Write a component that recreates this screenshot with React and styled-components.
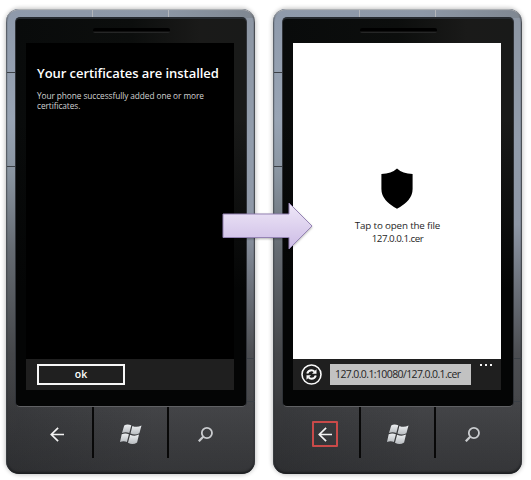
import React from "react";
import styled, { createGlobalStyle } from "styled-components";

const GlobalStyle = createGlobalStyle`
  html, body { margin: 0; background: #fff; overflow: hidden; }
  *, *::before, *::after { box-sizing: border-box; }
  body { font-family: "Open Sans", "Noto Sans", sans-serif; }
`;

const Stage = styled.main`
  position: relative;
  display: flex;
  gap: 18px;
  width: 531px;
  height: 480px;
  padding: 9px 0 0 6px;
  background: #fff;
`;

const Body = styled.section`
  position: relative;
  display: flex;
  flex-direction: column;
  flex: none;
  width: 249px;
  height: 465px;
  padding: 8px 8px 0 9px;
  overflow: hidden;
  border-radius: 13px;
  background:
    linear-gradient(180deg, transparent 385px, rgba(30, 31, 33, 0.3) 465px),
    linear-gradient(90deg, rgba(20, 22, 24, 0.25), transparent 60%),
    linear-gradient(180deg, #8d96a3 0, #929dac 130px, #8e97a6 215px, #707680 270px, #4c4e52 345px, #454649 400px, #3e3f42 465px);
`;

const LeftRail = styled.span`
  position: absolute;
  left: 0;
  top: 0;
  width: 10px;
  height: 465px;
  background: linear-gradient(180deg, #8f9aab 0, #98a4b4 110px, #8994a0 165px, #656b72 240px, #45474a 345px, rgba(56, 57, 59, 0.4) 400px, transparent 430px);
`;

const TopRail = styled.span`
  position: absolute;
  left: 0;
  top: 0;
  width: 249px;
  height: 9px;
  background: linear-gradient(90deg, #8f9aab, #8d98a7 60%, #7f8791);
`;

const Rim = styled.span`
  position: absolute;
  inset: 0;
  border-radius: 13px;
  box-shadow: inset 0 1px 1px #b4b6b9, inset 1px 0 1px rgba(50, 55, 62, 0.55),
    inset -1px 0 1px rgba(35, 38, 44, 0.7), inset 0 -2px 2px #1d1e20;
`;

const Halo = styled.div`
  flex: none;
  width: 249px;
  height: 465px;
  border-radius: 14px;
  box-shadow: 0 0 4px 1px rgba(0, 0, 0, 0.23);
`;

const Seam = styled.span`
  position: absolute;
  left: ${(p) => p.$x}px;
  top: ${(p) => p.$y}px;
  width: ${(p) => (p.$vertical ? 1 : 8)}px;
  height: ${(p) => (p.$vertical ? 7 : 1)}px;
  background: ${(p) => (p.$vertical ? "#b3b6bb" : "#3c4147")};
`;

const Glass = styled.div`
  position: relative;
  display: flex;
  flex-direction: column;
  align-items: flex-start;
  height: 390px;
  flex: none;
  padding: 9px 0 0 10px;
  border: 1px solid #303338;
  border-top: 2px solid #262a2f;
  border-bottom-color: #606164;
  border-radius: 5px;
  background:
    linear-gradient(180deg, transparent 100px, #040505 270px),
    linear-gradient(90deg, #090b0b 0, #0c0e0d 50%, #1a1a19 80%, #191a19 100%);
`;

const Speaker = styled.span`
  width: 77px;
  height: 5px;
  flex: none;
  margin: 0 0 10px 67px;
  border-radius: 2px;
  background: linear-gradient(180deg, #000 55%, #303131);
`;

const Screen = styled.div`
  display: flex;
  flex-direction: column;
  width: 208px;
  height: 347px;
  flex: none;
  background: ${(p) => (p.$light ? "#fff" : "#000")};
`;

const Message = styled.div`
  flex: 1;
  padding: 21px 0 0 11px;
  color: #fff;
`;

const Title = styled.h1`
  margin: 0;
  font: 600 13px/18px "Open Sans", sans-serif;
  letter-spacing: -0.06px;
  white-space: nowrap;
`;

const Description = styled.p`
  margin: 9px 0 0;
  color: #d2d2d2;
  font: 400 8.3px/10px "Open Sans", sans-serif;
  letter-spacing: -0.08px;
  white-space: nowrap;
`;

const AppBar = styled.div`
  display: flex;
  align-items: flex-start;
  height: 31px;
  flex: none;
  padding: ${(p) => (p.$browser ? "5px 5px 0 8px" : "5px 0 0 11px")};
  background: #1f1f1f;
`;

const OkButton = styled.button`
  width: 88px;
  height: 21px;
  padding: 0;
  border: 2px solid #f7f7f7;
  background: #202020;
  color: #fff;
  font: 600 10.5px/15px "Open Sans", sans-serif;
`;

const FilePrompt = styled.div`
  flex: 1;
  display: flex;
  flex-direction: column;
  align-items: center;
  padding-top: 125px;
`;

const Shield = styled.svg`
  width: 32px;
  height: 41px;
`;

const PromptText = styled.p`
  margin: 10px 0 0 1px;
  color: #262626;
  font: 400 9.8px/13px "Open Sans", sans-serif;
  letter-spacing: -0.16px;
  text-align: center;
`;

const FileName = styled.span`
  display: block;
  letter-spacing: -0.5px;
`;

const Address = styled.div`
  width: 141px;
  height: 21px;
  margin-left: 8px;
  padding-left: 5px;
  background: #c2c2c2;
  color: #252525;
  font: 400 10.5px/21px "Open Sans", sans-serif;
  letter-spacing: -0.61px;
  white-space: nowrap;
`;

const Dots = styled.div`
  display: flex;
  gap: 3px;
  margin: 0 0 0 9px;
`;

const Dot = styled.span`
  width: 2px;
  height: 2px;
  background: #f4f4f4;
`;

const Keys = styled.nav`
  display: grid;
  grid-template-columns: 79px 75px 1fr;
  height: 51px;
`;

const Key = styled.div`
  display: flex;
  align-items: center;
  justify-content: ${(p) => (p.$offset ? "flex-start" : "center")};
  padding: 3px 0 0 ${(p) => p.$offset || 0}px;
  border-right: ${(p) => (p.$divider ? "2px solid #080808" : "none")};
`;

const Focus = styled.span`
  display: grid;
  place-items: center;
  width: 26px;
  height: 26px;
  border: 2px solid ${(p) => (p.$active ? "#c94a49" : "transparent")};
  border-radius: 1px;
`;

const Arrow = styled.svg`
  position: absolute;
  left: 220px;
  top: 198.5px;
  width: 96px;
  height: 54px;
  filter: drop-shadow(0 1px 1px rgba(0, 0, 0, 0.3));
`;

const BackIcon = () => (
  <svg width="14" height="15" viewBox="0 0 14 15" fill="none" stroke="#f3f3f3" strokeWidth="1.7">
    <path d="M14 7.5H1.5M8.1 .8L1.3 7.5l6.8 6.7" />
  </svg>
);

const WindowsIcon = () => (
  <svg width="22" height="21" viewBox="0 0 22 21">
    <defs>
      <linearGradient id="flag" x1="0" y1="0" x2="0" y2="1">
        <stop offset="0" stopColor="#eceef0" />
        <stop offset="1" stopColor="#b9bdc1" />
      </linearGradient>
    </defs>
    <g fill="url(#flag)">
      <path d="M4.2 1.4Q7.2-.2 11.3 1.3L9.3 9.1Q5.7 7.4 2 9.1Z" />
      <path d="M12.4 1.9Q16.8 3.8 21.5 1.6L19.4 9.3Q15.2 11.5 10.5 9.6Z" />
      <path d="M1.7 10.3Q5.2 8.6 8.9 10.2L6.9 18Q3.5 16.6 0 18.1Z" />
      <path d="M10.1 10.7Q14.6 12.7 19 10.6L17.1 18.4Q12.8 21.3 8 18.7Z" />
    </g>
  </svg>
);

const SearchIcon = () => (
  <svg width="15" height="15" viewBox="0 0 15 15" fill="none" stroke="#c9cbce" strokeWidth="1.8">
    <circle cx="8.9" cy="6" r="5.1" />
    <path d="M5.2 9.7L.8 14.3" strokeWidth="2.2" />
  </svg>
);

const RefreshIcon = () => (
  <svg width="21" height="21" viewBox="0 0 21 21" fill="none" stroke="#fafafa">
    <circle cx="10.5" cy="10.5" r="9.5" strokeWidth="1.6" />
    <path d="M6.2 9.5Q7.2 6.3 10.6 6.3Q12.3 6.3 13.5 7.6M14.8 11.5Q13.8 14.7 10.4 14.7Q8.7 14.7 7.5 13.4" strokeWidth="2" />
    <path d="M15.5 5.3V9.8H11ZM5.5 15.7V11.2H10Z" fill="#fafafa" stroke="none" />
  </svg>
);

function Phone({ light, backActive, children }) {
  return (
    <Halo>
      <Body>
        <LeftRail />
        <TopRail />
        <Rim />
        <Seam $x={86} $y={1} $vertical />
        <Seam $x={162} $y={1} $vertical />
        <Seam $x={1} $y={63} />
        <Seam $x={1} $y={157} />
        <Seam $x={241} $y={349} />
        <Seam $x={241} $y={392} />
        <Glass>
          <Speaker />
          <Screen $light={light}>{children}</Screen>
        </Glass>
        <Keys>
          <Key $divider $offset={backActive ? 30 : 29}>
            <Focus $active={backActive}><BackIcon /></Focus>
          </Key>
          <Key $divider><WindowsIcon /></Key>
          <Key $offset={29}><SearchIcon /></Key>
        </Keys>
      </Body>
    </Halo>
  );
}

export default function App() {
  return (
    <>
      <GlobalStyle />
      <Stage>
        <Phone>
          <Message>
            <Title>Your certificates are installed</Title>
            <Description>
              Your phone successfully added one or more
              <br />
              certificates.
            </Description>
          </Message>
          <AppBar>
            <OkButton>ok</OkButton>
          </AppBar>
        </Phone>
        <Phone light backActive>
          <FilePrompt>
            <Shield viewBox="0 0 32 41">
              <path d="M16 .5Q21.5 5.8 31.6 6V21Q31.6 32.5 16 40.7Q.4 32.5 .4 21V6Q10.5 5.8 16 .5Z" />
            </Shield>
            <PromptText>
              Tap to open the file
              <FileName>127.0.0.1.cer</FileName>
            </PromptText>
          </FilePrompt>
          <AppBar $browser>
            <RefreshIcon />
            <Address>127.0.0.1:10080/127.0.0.1.cer</Address>
            <Dots><Dot /><Dot /><Dot /></Dots>
          </AppBar>
        </Phone>
        <Arrow viewBox="0 0 96 54">
          <defs>
            <linearGradient id="lilac" x1="0" y1="0" x2="0" y2="1">
              <stop offset="0" stopColor="#efe8f8" />
              <stop offset="1" stopColor="#ccbbe5" />
            </linearGradient>
          </defs>
          <path d="M3 15H69V4L92 27L69 50V38.5H3Z" fill="url(#lilac)" stroke="#9583b4" />
        </Arrow>
      </Stage>
    </>
  );
}
